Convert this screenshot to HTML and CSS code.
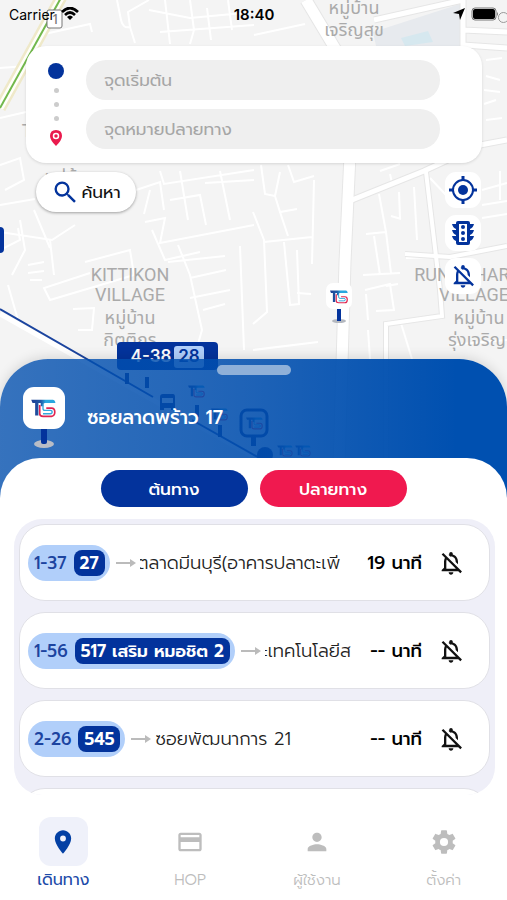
FILE: index.html
```
<!DOCTYPE html>
<html lang="th">

<head>

<meta charset="utf-8">
<meta name="viewport" content="width=device-width, initial-scale=1">
<title>ซอยลาดพร้าว 17</title>

<link rel="stylesheet" href="styles.css">

</head>

<body>

<!-- shared icons -->
<svg class="sprite" aria-hidden="true">
   <defs>
      <linearGradient id="tbar" x1="0" x2="1">
         <stop offset="0" stop-color="#1d3f93"/>
         <stop offset="0.4" stop-color="#1f59a6"/>
         <stop offset="0.6" stop-color="#2aa7df"/>
      </linearGradient>
   </defs>
   <symbol id="logo" viewBox="0 0 75 58">
      <path d="M0 2H66Q72 2 74 12H42Q37 12 37 18V22H29V12H22V50H12V12H4Z" fill="url(#tbar)"/>
      <path d="M46 28H62Q72 28 72 40T62 53H36Q26 53 26 45V18" fill="none" stroke="#e0244f" stroke-width="5"/>
      <path d="M36 16V29Q36 35 42 35H58Q64 35 64 40T58 45H36" fill="none" stroke="#35a8dc" stroke-width="4"/>
   </symbol>
   <symbol id="bell-off" viewBox="0 0 24 24">
      <path d="M12 22c1.100 0 2-.9 2-2h-4c0 1.100.9 2 2 2zm0-15.500c2.490 0 4 2.020 4 4.500v.1l2 2V11c0-3.070-1.630-5.640-4.500-6.320V4c0-.83-.67-1.500-1.500-1.500s-1.500.67-1.500 1.500v.68c-.24.06-.47.15-.69.23l1.640 1.640c.18-.02.36-.05.55-.05zM5.410 3.350L4 4.760l2.810 2.810C6.290 8.570 6 9.740 6 11v5l-2 2v1h14.240l1.740 1.740 1.410-1.410L5.410 3.350zM16 17H8v-6c0-.68.12-1.320.34-1.900L16 16.760V17z"/>
   </symbol>
   <symbol id="place" viewBox="0 0 24 24">
      <path d="M12 2C8.130 2 5 5.130 5 9c0 5.250 7 13 7 13s7-7.750 7-13c0-3.870-3.130-7-7-7zm0 9.500a2.500 2.500 0 0 1 0-5 2.500 2.500 0 0 1 0 5z"/>
   </symbol>
   <symbol id="arrow" viewBox="0 0 20 10">
      <path d="M0 5H16" stroke="currentColor" stroke-width="2"/>
      <path d="M14 1L20 5L14 9Z" fill="currentColor"/>
   </symbol>
</svg>

<main class="app">

   <svg class="map" viewBox="0 0 507 500" preserveAspectRatio="xMidYMin slice" aria-hidden="true">
      <rect width="507" height="500" fill="#f4f4f4"/>
      <path d="M373 32L460 4L462 46H376Z" fill="#e7eaee"/>
      <path d="M401 38L428 31L433 42L405 46Z" fill="#d6e8ef"/>

      <!-- small streets -->
      <g class="street">
         <path d="M117 0L121 20Q123 29 130 27L128 12L149 0M130 27L135 43M149 10L190 18L254 12M165 0L170 44M190 0L194 30L190 44M207 8L211 40M228 0L232 30M160 32L254 25M254 35L305 24M0 68L26 66M0 118L26 112M40 35L90 24L92 32"/>
         <path d="M0 165L20 158L24 180L5 190M0 205L35 199M20 220L25 250L12 275M0 232L52 240L75 225M34 210L50 248M8 285L18 320M136 190L160 182L164 210M144 214L150 190M160 171L164 184L254 170M170 200L200 195L206 225M180 171L188 220M220 171L230 220M205 183L254 180"/>
         <path d="M145 222L165 218L160 243L254 225M85 262L130 250L134 275L50 300L44 288L90 273M152 230L165 260L200 252M178 245L190 275L202 330L194 358M168 262L225 256M190 278L226 270M190 298L230 290M203 310L225 304M240 246L244 350M73 309L94 308L92 330L78 330M28 265L44 262M28 273L44 271M30 280L42 280M0 250L20 240L18 228M50 240L54 275"/>
         <path d="M261 165L265 194L275 196L280 172M275 196L280 212L297 209M280 212L288 236M288 165L294 182L314 176M253 212L264 240L267 312L253 324M264 242L312 237M284 242L290 305L299 304L297 250M314 180L312 264M297 293L311 294M253 350L318 342"/>
         <path d="M379 194L386 232L391 273M366 234L386 232M374 236L380 275M363 275L400 273M399 192L400 218M414 187L417 240M391 216L401 219M406 258L434 257M365 290L390 284L394 310L376 311M386 286L398 284M366 294L368 320M400 320L412 359M368 330L370 359"/>
         <path d="M482 190L507 183M482 205L507 201M482 218L507 214M500 171V200M486 60L502 58M486 76L500 80M484 90L500 92M484 104L496 100M486 120L502 118M430 178L446 195M380 171L400 164M390 174L392 183M448 345L507 340"/>
      </g>

      <!-- main roads -->
      <g class="road-edge">
         <path d="M306 0L336 50M350 155L345 262L338 500" stroke-width="13"/>
         <path d="M352 200L424 171L452 158M463 0V45L507 48M463 30L507 32M374 20L463 0M480 145L507 140" stroke-width="7"/>
         <path d="M426 172L440 290L442 316L386 324V500M405 254L450 257L507 246" stroke-width="6"/>
      </g>
      <g class="road">
         <path d="M306 0L336 50M350 155L345 262L338 500" stroke-width="11"/>
         <path d="M352 200L424 171L452 158M463 0V45L507 48M463 30L507 32M374 20L463 0M480 145L507 140" stroke-width="5"/>
         <path d="M426 172L440 290L442 316L386 324V500M405 254L450 257L507 246" stroke-width="4"/>
      </g>

      <!-- highway with shield -->
      <path d="M62 -4L0 108" stroke="#efe9c9" stroke-width="12"/>
      <path d="M62 -4L0 108" stroke="#fffffa" stroke-width="7"/>
      <path d="M62 -4L0 108" stroke="#72b84c" stroke-width="2"/>
      <rect x="47" y="10" width="15" height="18" rx="2" fill="#fff" stroke="#777"/>
      <text class="shield" x="55" y="24">1</text>

      <!-- place names -->
      <g class="place-name">
         <text x="354" y="14">หมู่บ้าน</text>
         <text x="354" y="36">เจริญสุข</text>
         <text x="70" y="183">หมู่บ้าน</text>
         <text x="27" y="137">T</text>
         <text x="130" y="281">KITTIKON</text>
         <text x="130" y="301">VILLAGE</text>
         <text x="130" y="324">หมู่บ้าน</text>
         <text x="130" y="346">กิตติกร</text>
         <text x="462" y="281">RUNGCHAR</text>
         <text x="474" y="301">VILLAGE</text>
         <text x="479" y="324">หมู่บ้าน</text>
         <text x="477" y="346">รุ่งเจริญ</text>
      </g>

      <!-- route and stops -->
      <path d="M0 314L270 466" stroke="#fff" stroke-width="5"/>
      <path d="M0 309L153 397M192 420L270 464" stroke="#1b449f" stroke-width="2"/>
      <rect x="-10" y="227" width="14" height="26" rx="4" fill="#03339c"/>
      <g fill="#0b2c80">
         <path d="M125 373h4v11h-4zM145 377h4v11h-4zM195 405h4v12h-4zM218 425h4v12h-4zM251 436h5v10h-5z"/>
         <path d="M163 394h10q2 0 2 3v13h-4v-2h-7v2h-4v-13q0-3 3-3zm-1 4v5h11v-5z"/>
         <circle cx="265" cy="455" r="8"/>
      </g>
      <rect x="241" y="410" width="26" height="26" rx="6" fill="none" stroke="#0b2c80" stroke-width="3"/>
      <use href="#logo" x="188" y="385" width="17" height="13"/>
      <use href="#logo" x="246" y="417" width="17" height="13"/>
      <use href="#logo" x="211" y="408" width="17" height="13"/>
      <use href="#logo" x="277" y="445" width="16" height="12"/>
      <use href="#logo" x="295" y="445" width="16" height="12"/>
      <rect x="117" y="342" width="101" height="28" rx="4" fill="#03339c"/>
      <rect x="174" y="346" width="30" height="22" rx="3" fill="#b1cffa"/>
      <text class="route-code" x="151" y="362" fill="#fff">4-38</text>
      <text class="route-code" x="189" y="362" fill="#03339c">28</text>

      <ellipse cx="339" cy="321" rx="7" ry="2" fill="#b4b8bf"/>
      <rect x="337" y="309" width="4" height="12" fill="#03339c"/>
      <rect x="326" y="283" width="26" height="26" rx="7" fill="#fff"/>
      <use href="#logo" x="330" y="290" width="18" height="14"/>
      <path d="M507 14a5 5 0 1 0 0 7" fill="none" stroke="#999"/>
   </svg>

   <div class="map-controls">

      <div class="statusbar">
         <span class="carrier">Carrier
            <svg class="wifi" viewBox="0 0 18 14"><path d="M1 5Q9 -3 17 5M4 8Q9 3 14 8" fill="none" stroke="#000" stroke-width="2.600"/><path d="M6 10Q9 7 12 10L9 13Z"/></svg>
         </span>
         <time class="clock">18:40</time>
         <span class="power">
            <svg class="compass" viewBox="0 0 12 12"><path d="M12 0L7 12L6 6L0 5Z"/></svg>
            <svg class="battery" viewBox="0 0 28 14"><rect x="1" y="1" width="24" height="12" rx="3" fill="#eee" stroke="#777"/><rect x="2" y="2" width="22" height="10" rx="2"/><path d="M26 5q2 2 0 4z" fill="#777"/></svg>
         </span>
      </div>

      <form class="trip">
         <div class="trip-icons">
            <span class="start"></span>
            <span class="dot"></span>
            <span class="dot"></span>
            <span class="dot"></span>
            <svg class="end" viewBox="0 0 12 16"><path d="M6 0Q12 0 12 6Q12 10 6 16Q0 10 0 6Q0 0 6 0Z" fill="#ea1a4d"/><circle cx="6" cy="6" r="2.500" fill="none" stroke="#fff" stroke-width="1.500"/></svg>
         </div>
         <div class="trip-fields">
            <input type="text" aria-label="จุดเริ่มต้น" placeholder="จุดเริ่มต้น">
            <input type="text" aria-label="จุดหมายปลายทาง" placeholder="จุดหมายปลายทาง">
         </div>
      </form>

      <div class="tools">
         <button class="search" type="button">
            <svg viewBox="0 0 24 24"><path d="M15.500 14h-.79l-.28-.27A6.470 6.470 0 0 0 16 9.500 6.500 6.500 0 1 0 9.500 16c1.610 0 3.090-.59 4.230-1.570l.27.28v.79l5.800 5.800 1.500-1.500L15.500 14zm-6 0a4.500 4.500 0 1 1 0-9 4.500 4.500 0 0 1 0 9z"/></svg>
            ค้นหา
         </button>
         <div class="tool-stack">
            <button type="button" aria-label="ตำแหน่งของฉัน">
               <svg viewBox="0 0 28 28"><circle cx="14" cy="14" r="10" fill="none" stroke="currentColor" stroke-width="2"/><circle cx="14" cy="14" r="5"/><path d="M14 0v4M14 24v4M0 14h4M24 14h4" stroke="currentColor" stroke-width="3"/></svg>
            </button>
            <button type="button" aria-label="การจราจร">
               <svg viewBox="0 0 28 28"><path fill-rule="evenodd" d="M9 2h10q2 0 2 2v1h4q-1 4-4 5v1h4q-1 4-4 5v1h4q-1 4-4 5v2q0 2-2 2H9q-2 0-2-2v-2q-3-1-4-5h4v-1q-3-1-4-5h4v-1Q4 9 3 5h4V4q0-2 2-2zm1 3v18h8V5z"/><circle cx="14" cy="8" r="2"/><circle cx="14" cy="14" r="2"/><circle cx="14" cy="20" r="2"/></svg>
            </button>
            <button type="button" aria-label="ปิดการแจ้งเตือน">
               <svg viewBox="0 0 24 24"><use href="#bell-off"/></svg>
            </button>
         </div>
      </div>

   </div>

   <section class="sheet">
      <header class="stop">
         <span class="grabber"></span>
         <svg class="stop-icon" viewBox="0 0 42 62">
            <ellipse cx="21" cy="57" rx="10" ry="4" fill="#b9bdc6"/>
            <rect x="18" y="40" width="6" height="17" rx="2" fill="#03339c"/>
            <rect width="42" height="42" rx="11" fill="#fff"/>
            <use href="#logo" x="8" y="12" width="25" height="19"/>
         </svg>
         <h1>ซอยลาดพร้าว 17</h1>
      </header>

      <div class="panel">
         <div class="directions">
            <button class="from" type="button">ต้นทาง</button>
            <button class="to" type="button">ปลายทาง</button>
         </div>

         <ul class="routes">
            <li class="route">
               <span class="line">1-37 <b>27</b></span>
               <svg class="arrow"><use href="#arrow"/></svg>
               <span class="dest scrolled">ตลาดมีนบุรี(อาคารปลาตะเพี</span>
               <span class="eta">19 นาที</span>
               <button class="alert" type="button" aria-label="แจ้งเตือน 1-37"><svg><use href="#bell-off"/></svg></button>
            </li>
            <li class="route">
               <span class="line">1-56 <b>517 เสริม หมอชิต 2</b></span>
               <svg class="arrow"><use href="#arrow"/></svg>
               <span class="dest scrolled">ะเทคโนโลยีส</span>
               <span class="eta">-- นาที</span>
               <button class="alert" type="button" aria-label="แจ้งเตือน 1-56"><svg><use href="#bell-off"/></svg></button>
            </li>
            <li class="route">
               <span class="line">2-26 <b>545</b></span>
               <svg class="arrow"><use href="#arrow"/></svg>
               <span class="dest">ซอยพัฒนาการ 21</span>
               <span class="eta">-- นาที</span>
               <button class="alert" type="button" aria-label="แจ้งเตือน 2-26"><svg><use href="#bell-off"/></svg></button>
            </li>
            <li class="route"></li>
         </ul>

         <nav class="tabs">
            <a class="active" href="#travel">
               <span class="tab-icon"><svg viewBox="0 0 24 24"><use href="#place"/></svg></span>
               เดินทาง
            </a>
            <a href="#hop">
               <span class="tab-icon"><svg viewBox="0 0 24 24"><path d="M20 4H4c-1.110 0-1.990.89-1.990 2L2 18c0 1.110.89 2 2 2h16c1.110 0 2-.89 2-2V6c0-1.110-.89-2-2-2zm0 14H4v-6h16v6zm0-10H4V6h16v2z"/></svg></span>
               HOP
            </a>
            <a href="#user">
               <span class="tab-icon"><svg viewBox="0 0 24 24"><path d="M12 12c2.210 0 4-1.790 4-4s-1.790-4-4-4-4 1.790-4 4 1.790 4 4 4zm0 2c-2.670 0-8 1.340-8 4v2h16v-2c0-2.660-5.330-4-8-4z"/></svg></span>
               ผู้ใช้งาน
            </a>
            <a href="#settings">
               <span class="tab-icon"><svg viewBox="0 0 24 24"><path d="M19.430 12.980c.04-.32.07-.64.07-.98s-.03-.66-.07-.98l2.110-1.650c.19-.15.24-.42.12-.64l-2-3.460c-.12-.22-.39-.3-.61-.22l-2.490 1c-.52-.4-1.080-.73-1.690-.98l-.38-2.650C14.460 2.180 14.250 2 14 2h-4c-.25 0-.46.18-.49.42l-.38 2.650c-.61.25-1.170.59-1.690.98l-2.490-1c-.23-.09-.49 0-.61.22l-2 3.460c-.13.22-.07.49.12.64l2.110 1.650c-.04.32-.07.65-.07.98s.03.66.07.98l-2.110 1.650c-.19.15-.24.42-.12.64l2 3.460c.12.22.39.3.61.22l2.490-1c.52.4 1.080.73 1.690.98l.38 2.650c.03.24.24.42.49.42h4c.25 0 .46-.18.49-.42l.38-2.650c.61-.25 1.170-.59 1.690-.98l2.490 1c.23.09.49 0 .61-.22l2-3.460c.12-.22.07-.49-.12-.64l-2.110-1.650zM12 15.500a3.500 3.500 0 1 1 0-7 3.500 3.500 0 0 1 0 7z"/></svg></span>
               ตั้งค่า
            </a>
         </nav>
      </div>
   </section>

</main>

</body>

</html>
```

FILE: styles.css
```
* {
   box-sizing:border-box;
}

html , body {
   margin:0px;
   padding:0px;
   height:100%;
}

body {
   font-family:Prompt, Kanit, Inter, "Noto Sans Thai", "Noto Sans", sans-serif;
   font-size:18px;
   color:#111;
   background:#fff;
}

button , input {
   font:inherit;
   border:0px;
}

button {
   padding:0px;
   cursor:pointer;
}

svg {
   display:block;
   fill:currentColor;
}

.sprite {
   position:absolute;
   width:0px;
   height:0px;
}

.app {
   position:relative;
   display:flex;
   flex-direction:column;
   height:100vh;
   overflow:hidden;
}

/* map */

.map {
   position:absolute;
   top:0px;
   left:0px;
   width:100%;
   height:500px;
}

.street {
   fill:none;
   stroke:#fff;
   stroke-width:2;
}

.road , .road-edge {
   fill:none;
   stroke:#fff;
}

.road-edge {
   stroke:#e6e6e6;
}

.place-name {
   font-family:Roboto, "Noto Sans Thai", sans-serif;
   font-size:18px;
   text-anchor:middle;
   fill:#aaa;
}

.shield {
   font-size:13px;
   text-anchor:middle;
   fill:#777;
}

.route-code {
   font-family:Inter, sans-serif;
   font-size:17px;
   font-weight:600;
   text-anchor:middle;
}

/* controls over the map */

.map-controls {
   position:relative;
   flex:1;
   min-height:0px;
}

.statusbar {
   display:grid;
   grid-template-columns:1fr auto 1fr;
   align-items:center;
   height:28px;
   padding:0px 8px 0px 9px;
   font-family:Inter, sans-serif;
   font-size:14px;
   color:#000;
}

.carrier , .power {
   display:flex;
   align-items:center;
   gap:6px;
}

.power {
   justify-content:flex-end;
}

.wifi {
   width:18px;
   height:14px;
}

.clock {
   font-size:15px;
   font-weight:600;
}

.compass {
   width:12px;
   height:12px;
}

.battery {
   width:28px;
   height:14px;
}

.trip {
   display:flex;
   margin:18px 25px 0px 26px;
   padding:14px 42px 14px 20px;
   border-radius:20px;
   background:#fff;
   box-shadow:0px 1px 3px rgba(0,0,0,0.12);
}

.trip-icons {
   display:flex;
   flex-direction:column;
   align-items:center;
   justify-content:space-between;
   width:20px;
   margin-right:20px;
   padding:3px 0px;
}

.start {
   width:16px;
   height:16px;
   border-radius:50%;
   background:#03339c;
}

.dot {
   width:5px;
   height:5px;
   border-radius:50%;
   background:#ccc;
}

.end {
   width:12px;
   height:16px;
}

.trip-fields {
   display:flex;
   flex:1;
   flex-direction:column;
   gap:9px;
}

.trip-fields input {
   width:100%;
   height:40px;
   padding:0px 18px;
   border-radius:20px;
   background:#efefef;
   font-size:17px;
}

.trip-fields input::placeholder {
   color:#a6a6a6;
   opacity:1;
}

.tools {
   display:flex;
   align-items:flex-start;
   justify-content:space-between;
   padding:9px 26px 0px 36px;
}

.search {
   display:flex;
   align-items:center;
   justify-content:center;
   gap:2px;
   width:100px;
   height:40px;
   border-radius:20px;
   background:#fff;
   box-shadow:0px 1px 3px rgba(0,0,0,0.35);
   font-size:17px;
   color:#111;
}

.search svg {
   width:28px;
   height:28px;
   color:#03339c;
}

.tool-stack {
   display:flex;
   flex-direction:column;
   gap:7px;
}

.tool-stack button {
   display:flex;
   align-items:center;
   justify-content:center;
   width:36px;
   height:36px;
   border-radius:11px;
   background:#fff;
   color:#03339c;
}

.tool-stack svg {
   width:28px;
   height:28px;
}

/* stop sheet */

.sheet {
   position:relative;
   display:flex;
   flex-direction:column;
   flex:none;
   height:541px;
   border-radius:48px 48px 0px 0px;
   background:linear-gradient(to right, rgba(0,78,174,0.78), rgba(0,78,174,0.88) 50%, #0050b0 90%);
   box-shadow:0px -2px 12px rgba(0,0,0,0.12);
}

.stop {
   position:relative;
   display:flex;
   flex:none;
   align-items:center;
   gap:22px;
   height:99px;
   padding:18px 23px 0px;
}

.grabber {
   position:absolute;
   top:6px;
   left:50%;
   width:74px;
   height:10px;
   margin-left:-37px;
   border-radius:5px;
   background:#8fb0d8;
}

.stop-icon {
   width:42px;
   height:62px;
}

.stop h1 {
   margin:0px;
   font-size:19px;
   font-weight:500;
   line-height:30px;
   color:#fff;
}

.panel {
   display:flex;
   flex:1;
   flex-direction:column;
   min-height:0px;
   padding-top:12px;
   border-radius:40px 40px 0px 0px;
   background:#fff;
}

.directions {
   display:flex;
   justify-content:center;
   gap:12px;
}

.directions button {
   width:147px;
   height:37px;
   border-radius:19px;
   color:#fff;
   font-size:17px;
   font-weight:500;
}

.from {
   background:#03339c;
}

.to {
   background:#f0194f;
}

.routes {
   display:flex;
   flex:1;
   flex-direction:column;
   gap:11px;
   min-height:0px;
   margin:12px 12px 0px 14px;
   padding:5px;
   overflow:hidden;
   border-radius:28px;
   background:#efeff8;
   list-style:none;
}

.route {
   display:flex;
   flex:0 0 77px;
   align-items:center;
   padding:0px 24px 0px 8px;
   border:1px solid #e0e0e6;
   border-radius:26px;
   background:#fff;
   white-space:nowrap;
}

.line {
   display:flex;
   align-items:center;
   gap:7px;
   height:36px;
   padding:0px 5px 0px 6px;
   border-radius:18px;
   background:#b1cffa;
   color:#1c44a0;
   font-size:17px;
   font-weight:500;
}

.line b {
   padding:0px 6px;
   border-radius:8px;
   background:#03339c;
   color:#fff;
   font-weight:600;
   line-height:26px;
}

.arrow {
   flex:none;
   width:20px;
   height:10px;
   margin:0px 4px 0px 6px;
   color:#bbb;
}

.dest {
   flex:1;
   min-width:0px;
   overflow:hidden;
   font-size:18px;
   font-weight:300;
   line-height:32px;
   color:#222;
}

.scrolled {
   text-indent:-3px;
}

.eta {
   min-width:56px;
   margin-left:14px;
   color:#000;
   font-size:18px;
   font-weight:500;
   text-align:right;
}

.alert {
   margin-left:15px;
   background:none;
   color:#111;
}

.alert svg {
   width:28px;
   height:28px;
}

.tabs {
   display:flex;
   flex:none;
   height:103px;
   margin-top:2px;
   padding-top:20px;
}

.tabs a {
   display:flex;
   flex:1;
   flex-direction:column;
   align-items:center;
   color:#bdbdbd;
   font-size:15px;
   font-weight:300;
   line-height:28px;
   text-decoration:none;
}

.tabs .active {
   color:#1c4aa8;
   font-size:16px;
   font-weight:400;
}

.tab-icon {
   display:flex;
   align-items:center;
   justify-content:center;
   width:49px;
   height:49px;
   border-radius:12px;
}

.tab-icon svg {
   width:28px;
   height:28px;
}

.active .tab-icon {
   background:#eff1fa;
   color:#0340a4;
}
```
